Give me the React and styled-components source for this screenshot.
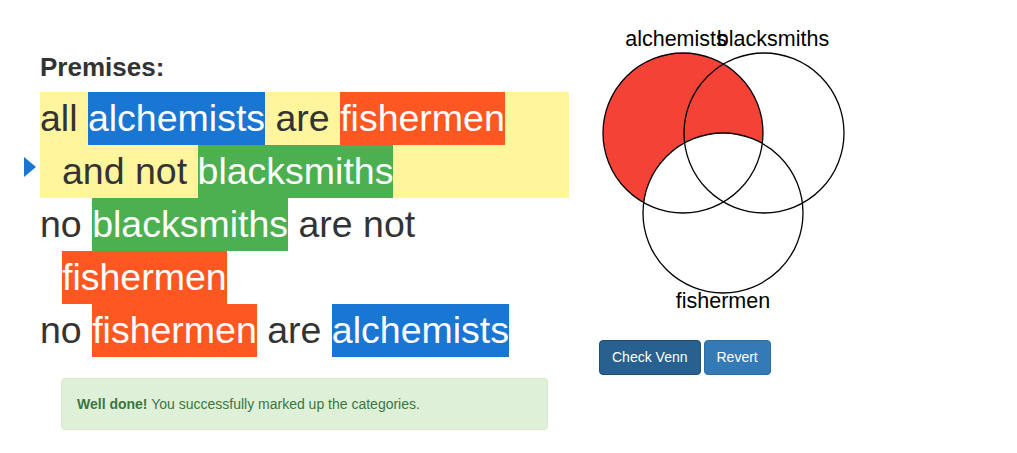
import React from "react"
import styled, { createGlobalStyle } from "styled-components"

const GlobalStyle = createGlobalStyle`
	body {
		margin: 0;
		background: #fff;
		font-family: "Liberation Sans", Arial, sans-serif;
		color: #333;
	}
`

const colors = {
	alchemists: "#1976d2",
	fishermen: "#ff5722",
	blacksmiths: "#4caf50",
}

const Page = styled.div`
	display: flex;
	gap: 21px;
	padding: 20px 0 0 40px;
`

const LeftColumn = styled.div`
	width: 529px;
	padding-top: 32px;
`

const Heading = styled.h3`
	margin: 0 0 10px;
	font-size: 26px;
	line-height: 30px;
	font-weight: bold;
	color: #333;
`

const Premise = styled.div`
	position: relative;
	padding-left: 22px;
	text-indent: -22px;
	font-size: 37.5px;
	line-height: 53px;
	color: #333;
	background: ${ props => props.selected ? "#fff59d" : "transparent" };
`

const Marker = styled.span`
	position: absolute;
	left: -16px;
	top: 65px;
	width: 0;
	height: 0;
	border-top: 10px solid transparent;
	border-bottom: 10px solid transparent;
	border-left: 12px solid #1976d2;
`

const Term = styled.span`
	display: inline-block;
	text-indent: 0;
	color: #fff;
	background: ${ props => colors[props.kind] };
`

const Alert = styled.div`
	margin: 21px 21px 0 21px;
	padding: 15px;
	border: 1px solid #d6e9c6;
	border-radius: 4px;
	background: #dff0d8;
	color: #3c763d;
	font-size: 14px;
	line-height: 20px;

	strong {
		font-weight: bold;
	}
`

const RightColumn = styled.div`
	display: flex;
	flex-direction: column;
	align-items: flex-start;
`

const Venn = styled.svg`
	display: block;
	width: 260px;
	height: 295px;

	text {
		font-family: "Liberation Sans", Arial, sans-serif;
		font-size: 21.5px;
		fill: #000;
	}
`

const Buttons = styled.div`
	display: flex;
	gap: 3px;
	margin: 25px 0 0 9px;
`

const Button = styled.button`
	padding: 6px 12px;
	border: 1px solid ${ props => props.active ? "#204d74" : "#2e6da4" };
	border-radius: 4px;
	background: ${ props => props.active ? "#286090" : "#337ab7" };
	color: #fff;
	font-family: "Liberation Sans", Arial, sans-serif;
	font-size: 14px;
	line-height: 21px;
	cursor: pointer;
`

const circles = {
	a: { cx: 93, cy: 113 },
	b: { cx: 174, cy: 113 },
	f: { cx: 133, cy: 193 },
}
const R = 80

const VennDiagram = () => (
	<Venn viewBox="0 0 260 295">
		<defs>
			<mask id="notFishermen">
				<rect x="0" y="0" width="260" height="295" fill="#fff" />
				<circle cx={ circles.f.cx } cy={ circles.f.cy } r={ R } fill="#000" />
			</mask>
		</defs>
		<circle cx={ circles.a.cx } cy={ circles.a.cy } r={ R } fill="#f44336" mask="url(#notFishermen)" />
		{ Object.values( circles ).map( ( c, i ) => (
			<circle key={ i } cx={ c.cx } cy={ c.cy } r={ R } fill="none" stroke="#000" strokeWidth="1.3" />
		) ) }
		<text x="86" y="26" textAnchor="middle">alchemists</text>
		<text x="183" y="26" textAnchor="middle">blacksmiths</text>
		<text x="133" y="288" textAnchor="middle">fishermen</text>
	</Venn>
)

const App = () => {
	return (
		<>
			<GlobalStyle />
			<Page>
				<LeftColumn>
					<Heading>Premises:</Heading>
					<Premise selected>
						<Marker />
						all <Term kind="alchemists">alchemists</Term> are <Term kind="fishermen">fishermen</Term><br />
						and not <Term kind="blacksmiths">blacksmiths</Term>
					</Premise>
					<Premise>
						no <Term kind="blacksmiths">blacksmiths</Term> are not <Term kind="fishermen">fishermen</Term>
					</Premise>
					<Premise>
						no <Term kind="fishermen">fishermen</Term> are <Term kind="alchemists">alchemists</Term>
					</Premise>
					<Alert>
						<strong>Well done!</strong> You successfully marked up the categories.
					</Alert>
				</LeftColumn>
				<RightColumn>
					<VennDiagram />
					<Buttons>
						<Button active>Check Venn</Button>
						<Button>Revert</Button>
					</Buttons>
				</RightColumn>
			</Page>
		</>
	)
}

export default App
